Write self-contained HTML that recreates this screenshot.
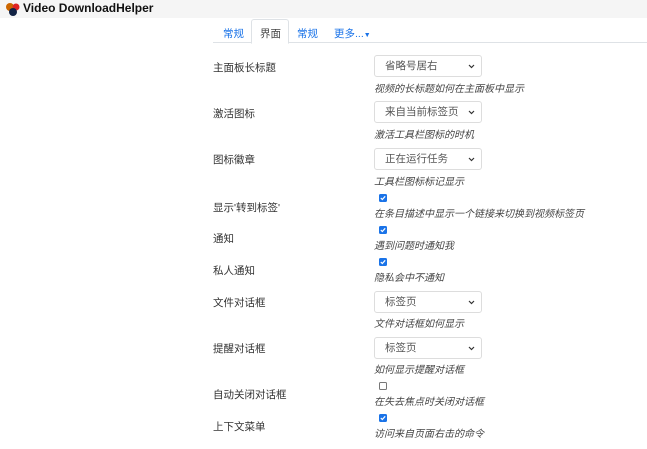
<!DOCTYPE html><html><head><meta charset="utf-8"><style>
body{margin:0;width:647px;height:449px;background:#fff;font-family:"Liberation Sans","Noto Sans CJK SC",sans-serif;color:#333;position:relative;overflow:hidden}
.hdr{position:absolute;left:0;top:0;width:647px;height:18px;background:#f5f5f5}
.hdr span{position:absolute;left:23px;top:1px;font-weight:bold;font-size:12px;color:#111}
.a{position:absolute;font-size:10.5px;white-space:nowrap}
.lbl{left:213px}
.sel{position:absolute;left:374px;width:106px;height:20px;border:1px solid #ddd;border-radius:3px;font-size:10.5px;line-height:20px;box-sizing:content-box}
.sel span{position:absolute;left:10px;color:#555}
.sel svg{position:absolute;right:6px;top:8px}
.help{left:374px;font-style:italic;color:#444;font-size:10px}
.cb{position:absolute;left:379px;width:8px;height:8px;background:#1a73e8;border-radius:1.5px}
.cb svg{position:absolute;left:0;top:0}
.cbe{position:absolute;left:379px;width:6px;height:6px;border:1px solid #777;border-radius:1.5px}
.tab{position:absolute;top:26px;font-size:10.5px;color:#1a73e8}
</style></head><body>
<div class="hdr"><svg style="position:absolute;left:5px;top:2px" width="16" height="14"><circle cx="5" cy="5" r="4" fill="#c60"/><circle cx="11" cy="5" r="3.5" fill="#d22"/><circle cx="8" cy="10" r="4" fill="#124"/></svg><span>Video DownloadHelper</span></div>
<div style="position:absolute;left:213px;top:42px;width:434px;height:1px;background:#dee2e6"></div>
<div style="position:absolute;left:251px;top:19px;width:36px;height:23px;border:1px solid #dee2e6;border-bottom:1px solid #fff;border-radius:3px 3px 0 0;background:#fff"></div>
<div class="tab" style="left:223px">常规</div>
<div class="tab" style="left:260px;color:#444">界面</div>
<div class="tab" style="left:297px">常规</div>
<div class="tab" style="left:334px">更多...<span style="font-size:7px">▼</span></div>

<div class="a lbl" style="top:60px">主面板长标题</div>
<div class="sel" style="top:55px"><span>省略号居右</span><svg width="7" height="5"><path d="M1 1L3.5 3.5L6 1" stroke="#333" fill="none" stroke-width="1.2"/></svg></div>
<div class="a help" style="top:80px">视频的长标题如何在主面板中显示</div>

<div class="a lbl" style="top:106px">激活图标</div>
<div class="sel" style="top:101px"><span>来自当前标签页</span><svg width="7" height="5"><path d="M1 1L3.5 3.5L6 1" stroke="#333" fill="none" stroke-width="1.2"/></svg></div>
<div class="a help" style="top:126px">激活工具栏图标的时机</div>

<div class="a lbl" style="top:152px">图标徽章</div>
<div class="sel" style="top:148px"><span>正在运行任务</span><svg width="7" height="5"><path d="M1 1L3.5 3.5L6 1" stroke="#333" fill="none" stroke-width="1.2"/></svg></div>
<div class="a help" style="top:173px">工具栏图标标记显示</div>

<div class="a lbl" style="top:200px">显示'转到标签'</div>
<div class="cb" style="top:194px"><svg width="8" height="8"><path d="M1.8 4L3.3 5.5L6.2 2.3" stroke="#fff" fill="none" stroke-width="1.2"/></svg></div>
<div class="a help" style="top:205px">在条目描述中显示一个链接来切换到视频标签页</div>

<div class="a lbl" style="top:231px">通知</div>
<div class="cb" style="top:226px"><svg width="8" height="8"><path d="M1.8 4L3.3 5.5L6.2 2.3" stroke="#fff" fill="none" stroke-width="1.2"/></svg></div>
<div class="a help" style="top:237px">遇到问题时通知我</div>

<div class="a lbl" style="top:263px">私人通知</div>
<div class="cb" style="top:258px"><svg width="8" height="8"><path d="M1.8 4L3.3 5.5L6.2 2.3" stroke="#fff" fill="none" stroke-width="1.2"/></svg></div>
<div class="a help" style="top:269px">隐私会中不通知</div>

<div class="a lbl" style="top:295px">文件对话框</div>
<div class="sel" style="top:291px"><span>标签页</span><svg width="7" height="5"><path d="M1 1L3.5 3.5L6 1" stroke="#333" fill="none" stroke-width="1.2"/></svg></div>
<div class="a help" style="top:315px">文件对话框如何显示</div>

<div class="a lbl" style="top:341px">提醒对话框</div>
<div class="sel" style="top:337px"><span>标签页</span><svg width="7" height="5"><path d="M1 1L3.5 3.5L6 1" stroke="#333" fill="none" stroke-width="1.2"/></svg></div>
<div class="a help" style="top:361px">如何显示提醒对话框</div>

<div class="a lbl" style="top:387px">自动关闭对话框</div>
<div class="cbe" style="top:382px"></div>
<div class="a help" style="top:393px">在失去焦点时关闭对话框</div>

<div class="a lbl" style="top:419px">上下文菜单</div>
<div class="cb" style="top:414px"><svg width="8" height="8"><path d="M1.8 4L3.3 5.5L6.2 2.3" stroke="#fff" fill="none" stroke-width="1.2"/></svg></div>
<div class="a help" style="top:425px">访问来自页面右击的命令</div>
</body></html>
